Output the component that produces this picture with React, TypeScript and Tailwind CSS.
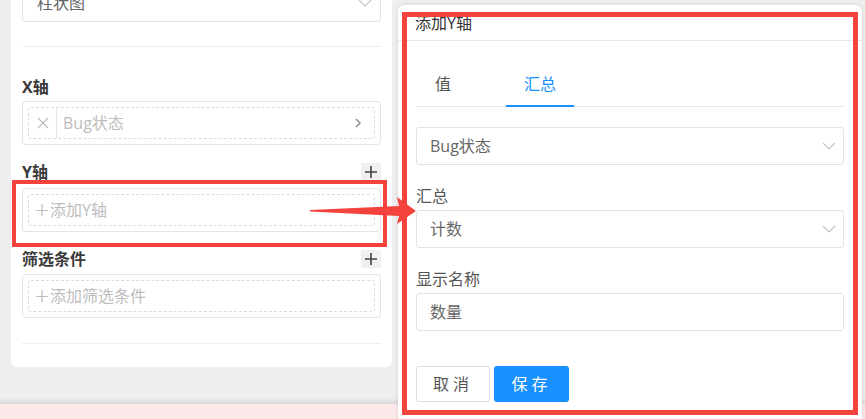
const ChevronDown = () => (
  <svg width="14" height="8" viewBox="0 0 14 8" fill="none">
    <polyline points="1,1 7,7 13,1" stroke="#c4c4c4" strokeWidth="1.2" />
  </svg>
);

const PlusButton = () => (
  <span className="flex h-[18px] w-[20px] items-center justify-center rounded-[2px] bg-[#f0f0f0]">
    <svg width="14" height="14" viewBox="0 0 14 14">
      <path d="M7 1v12M1 7h12" stroke="#444" strokeWidth="1.6" />
    </svg>
  </span>
);

function FieldBox({ children }: { children: React.ReactNode }) {
  return (
    <div className="h-[44px] rounded-[4px] border border-[#e3e3e3] p-[5px]">
      <div className="flex h-full items-center rounded-[3px] border border-dashed border-[#dcdcdc] text-[16px] text-[#bdbdbd]">
        {children}
      </div>
    </div>
  );
}

function Label({ text, plus }: { text: string; plus?: boolean }) {
  return (
    <div className="flex h-[20px] items-center justify-between">
      <span className="text-[16px] font-bold text-[#3a3a3a]">{text}</span>
      {plus && <PlusButton />}
    </div>
  );
}

function Select({ value }: { value: string }) {
  return (
    <div className="flex h-[38px] items-center justify-between rounded-[3px] border border-[#e2e2e2] pl-[13px] pr-[7px] text-[16px] text-[#666]">
      <span>{value}</span>
      <ChevronDown />
    </div>
  );
}

export default function App() {
  return (
    <div className="relative h-[419px] w-[865px] overflow-hidden bg-[#eeeeee] font-['Open_Sans','Noto_Sans_CJK_SC',sans-serif]">
      <div className="flow-root h-[398px]">
        <div className="ml-[11px] mt-[-30px] w-[381px] rounded-b-[6px] bg-white px-[11px] pb-[23px] pt-[14px]">
          <div className="flex h-[38px] items-center justify-between rounded-[3px] border border-[#e2e2e2] pl-[14px] pr-[8px] text-[16px] text-[#666]">
            <span>柱状图</span>
            <ChevronDown />
          </div>
          <div className="mt-[24px] border-t border-[#eeeeee]" />

          <div className="mt-[30px]">
            <Label text="X轴" />
          </div>
          <div className="mt-[4px]">
            <FieldBox>
              <span className="flex w-[28px] items-center justify-center self-stretch border-r border-[#e6e6e6]">
                <svg width="12" height="12" viewBox="0 0 12 12">
                  <path d="M1 1l10 10M11 1L1 11" stroke="#bbb" strokeWidth="1.1" />
                </svg>
              </span>
              <span className="ml-[6px] flex-1">Bug状态</span>
              <svg className="mr-[13px]" width="6" height="10" viewBox="0 0 6 10">
                <polyline points="1,1 5,5 1,9" fill="none" stroke="#888" strokeWidth="1.4" />
              </svg>
            </FieldBox>
          </div>

          <div className="mt-[17px]">
            <Label text="Y轴" plus />
          </div>
          <div className="mt-[6px]">
            <FieldBox>
              <span className="ml-[5px]">＋添加Y轴</span>
            </FieldBox>
          </div>

          <div className="mt-[17px]">
            <Label text="筛选条件" plus />
          </div>
          <div className="mt-[5px]">
            <FieldBox>
              <span className="ml-[5px]">＋添加筛选条件</span>
            </FieldBox>
          </div>

          <div className="mt-[25px] border-t border-[#eeeeee]" />
        </div>
      </div>
      <div className="h-[6px] bg-gradient-to-b from-[#eeeeee] to-[#d8d8d8]" />
      <div className="h-[15px] bg-[#fde8e9]" />

      {/* drawer */}
      <div className="absolute left-[398px] top-[5px] h-[430px] w-[464px] rounded-t-[6px] bg-white shadow-[0_0_4px_rgba(0,0,0,0.12)]">
        <div className="flex h-[36px] items-center border-b border-[#e8e8e8] pl-[17px] text-[16px] text-[#333]">
          添加Y轴
        </div>
        <div className="px-[18px]">
          <div className="mt-[21px] flex h-[45px] border-b border-[#e8e8e8] text-[16px]">
            <div className="flex items-center px-[19px] text-[#555]">值</div>
            <div className="-mb-px ml-[36px] flex items-center border-b-2 border-[#1890ff] px-[18px] text-[#1890ff]">
              汇总
            </div>
          </div>
          <div className="mt-[20px]">
            <Select value="Bug状态" />
          </div>
          <div className="mt-[21px] flex h-[20px] items-center text-[16px] text-[#555]">汇总</div>
          <div className="mt-[4px]">
            <Select value="计数" />
          </div>
          <div className="mt-[21px] flex h-[20px] items-center text-[16px] text-[#555]">显示名称</div>
          <div className="mt-[4px] flex h-[38px] items-center rounded-[3px] border border-[#e2e2e2] pl-[13px] text-[16px] text-[#666]">
            数量
          </div>
          <div className="mt-[35px] flex gap-[4px]">
            <button className="h-[36px] w-[74px] rounded-[3px] border border-[#dcdcdc] bg-white text-[16px] tracking-[4px] text-[#555]">
              取消
            </button>
            <button className="h-[36px] w-[75px] rounded-[3px] bg-[#1890ff] text-[16px] tracking-[4px] text-white">
              保存
            </button>
          </div>
        </div>
      </div>

      {/* annotations */}
      <div className="absolute left-[12px] top-[180px] h-[67px] w-[375px] border-[4px] border-[#f4433c]" />
      <div className="absolute left-[402px] top-[12px] h-[403px] w-[456px] border-[5px] border-[#f4433c]" />
      <svg className="pointer-events-none absolute left-0 top-0" width="865" height="419">
        <polygon
          points="310,210 399,206 397,197 416,211 397,224 399,216 310,211.5"
          fill="#f4433c"
        />
      </svg>
    </div>
  );
}
